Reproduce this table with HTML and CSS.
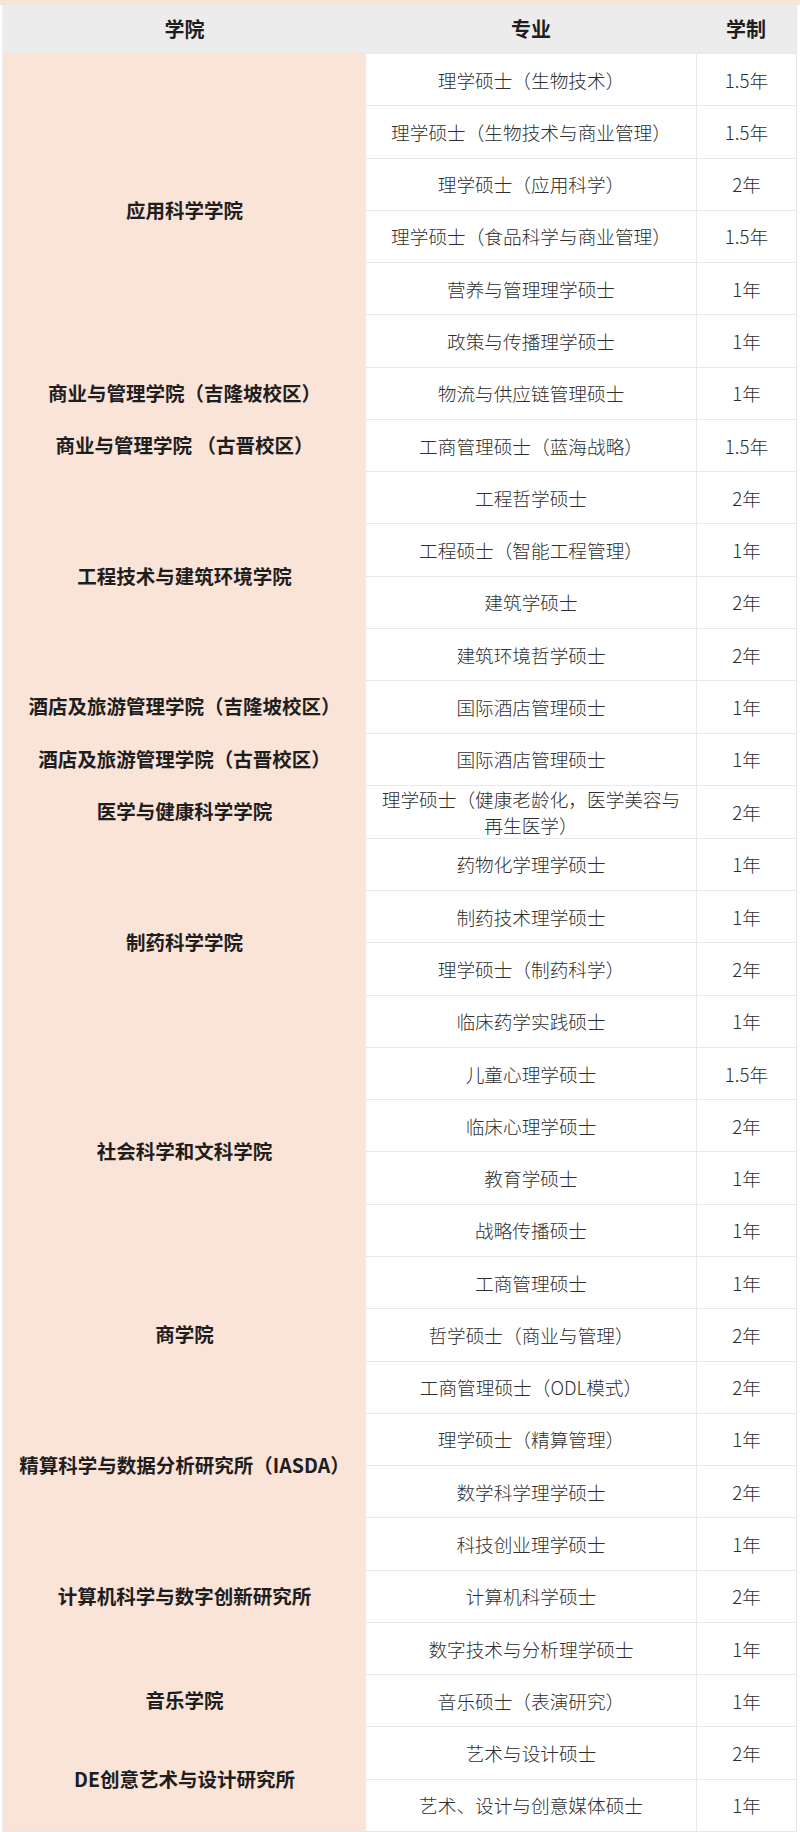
FILE: index.html
```html
<!DOCTYPE html>
<html lang="zh-CN">
<head>
<meta charset="utf-8">
<title>硕士课程</title>
<link rel="stylesheet" href="styles.css">
</head>
<body>
<div class="strip"></div>
<div class="table">
  <div class="th">学院</div><div class="th">专业</div><div class="th">学制</div>

  <div class="school span6">应用科学学院</div>
  <div class="major">理学硕士（生物技术）</div><div class="dur">1.5年</div>
  <div class="major">理学硕士（生物技术与商业管理）</div><div class="dur">1.5年</div>
  <div class="major">理学硕士（应用科学）</div><div class="dur">2年</div>
  <div class="major">理学硕士（食品科学与商业管理）</div><div class="dur">1.5年</div>
  <div class="major">营养与管理理学硕士</div><div class="dur">1年</div>
  <div class="major">政策与传播理学硕士</div><div class="dur">1年</div>

  <div class="school">商业与管理学院（吉隆坡校区）</div>
  <div class="major">物流与供应链管理硕士</div><div class="dur">1年</div>

  <div class="school">商业与管理学院 （古晋校区）</div>
  <div class="major">工商管理硕士（蓝海战略）</div><div class="dur">1.5年</div>

  <div class="school span4">工程技术与建筑环境学院</div>
  <div class="major">工程哲学硕士</div><div class="dur">2年</div>
  <div class="major">工程硕士（智能工程管理）</div><div class="dur">1年</div>
  <div class="major">建筑学硕士</div><div class="dur">2年</div>
  <div class="major">建筑环境哲学硕士</div><div class="dur">2年</div>

  <div class="school">酒店及旅游管理学院（吉隆坡校区）</div>
  <div class="major">国际酒店管理硕士</div><div class="dur">1年</div>

  <div class="school">酒店及旅游管理学院（古晋校区）</div>
  <div class="major">国际酒店管理硕士</div><div class="dur">1年</div>

  <div class="school">医学与健康科学学院</div>
  <div class="major">理学硕士（健康老龄化，医学美容与再生医学）</div><div class="dur">2年</div>

  <div class="school span4">制药科学学院</div>
  <div class="major">药物化学理学硕士</div><div class="dur">1年</div>
  <div class="major">制药技术理学硕士</div><div class="dur">1年</div>
  <div class="major">理学硕士（制药科学）</div><div class="dur">2年</div>
  <div class="major">临床药学实践硕士</div><div class="dur">1年</div>

  <div class="school span4">社会科学和文科学院</div>
  <div class="major">儿童心理学硕士</div><div class="dur">1.5年</div>
  <div class="major">临床心理学硕士</div><div class="dur">2年</div>
  <div class="major">教育学硕士</div><div class="dur">1年</div>
  <div class="major">战略传播硕士</div><div class="dur">1年</div>

  <div class="school span3">商学院</div>
  <div class="major">工商管理硕士</div><div class="dur">1年</div>
  <div class="major">哲学硕士（商业与管理）</div><div class="dur">2年</div>
  <div class="major">工商管理硕士（ODL模式）</div><div class="dur">2年</div>

  <div class="school span2">精算科学与数据分析研究所（IASDA）</div>
  <div class="major">理学硕士（精算管理）</div><div class="dur">1年</div>
  <div class="major">数学科学理学硕士</div><div class="dur">2年</div>

  <div class="school span3">计算机科学与数字创新研究所</div>
  <div class="major">科技创业理学硕士</div><div class="dur">1年</div>
  <div class="major">计算机科学硕士</div><div class="dur">2年</div>
  <div class="major">数字技术与分析理学硕士</div><div class="dur">1年</div>

  <div class="school">音乐学院</div>
  <div class="major">音乐硕士（表演研究）</div><div class="dur">1年</div>

  <div class="school span2">DE创意艺术与设计研究所</div>
  <div class="major">艺术与设计硕士</div><div class="dur">2年</div>
  <div class="major">艺术、设计与创意媒体硕士</div><div class="dur">1年</div>
</div>
</body>
</html>
```
FILE: styles.css
```css
html, body {
  margin: 0;
  padding: 0;
  background: #ffffff;
}

body {
  width: 800px;
  font-family: "Noto Sans CJK SC", "Noto Sans", sans-serif;
  color: #333333;
}

.strip {
  height: 5px;
  background: #f7e4da;
}

.table {
  box-sizing: border-box;
  display: grid;
  grid-template-columns: 363px 330px 1fr;
  grid-template-rows: 48px repeat(34, 1fr);
  width: 795px;
  height: 1827px;
  margin-left: 2px;
  border-left: 1px solid #eeeeee;
  border-right: 1px solid #e6e6e6;
  border-bottom: 1px solid #e6e6e6;
}

.th,
.school,
.major,
.dur {
  display: flex;
  align-items: center;
  justify-content: center;
  text-align: center;
  line-height: 26px;
  padding: 0 10px;
}

.th {
  background: #ececec;
  font-size: 20px;
  font-weight: 700;
  color: #1e1e1e;
}

.school {
  background: #fae3d7;
  font-size: 19.5px;
  font-weight: 700;
  color: #1e1e1e;
  padding: 0 6px;
  white-space: nowrap;
}

.span2 { grid-row: span 2; }
.span3 { grid-row: span 3; }
.span4 { grid-row: span 4; }
.span6 { grid-row: span 6; }

.major,
.dur {
  background: #ffffff;
  font-size: 18.67px;
  font-weight: 300;
  color: #2e2e2e;
  border-top: 1px solid #e9e9e9;
}

.dur {
  border-left: 1px solid #e9e9e9;
}
```
